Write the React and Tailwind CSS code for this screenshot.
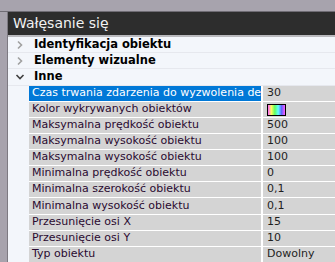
import React from "react";

const props = [
  { label: "Czas trwania zdarzenia do wyzwolenia dewiacji", value: "30", selected: true },
  { label: "Kolor wykrywanych obiektów", color: true },
  { label: "Maksymalna prędkość obiektu", value: "500" },
  { label: "Maksymalna wysokość obiektu", value: "100" },
  { label: "Maksymalna wysokość obiektu", value: "100" },
  { label: "Minimalna prędkość obiektu", value: "0" },
  { label: "Minimalna szerokość obiektu", value: "0,1" },
  { label: "Minimalna wysokość obiektu", value: "0,1", tall: true },
  { label: "Przesunięcie osi X", value: "15" },
  { label: "Przesunięcie osi Y", value: "10" },
  { label: "Typ obiektu", value: "Dowolny" },
];

const Chevron = ({ open }) => (
  <svg width="10" height="10" viewBox="0 0 10 10" className="shrink-0">
    {open ? (
      <path d="M1.5 3 L5 6.5 L8.5 3" fill="none" stroke="#404040" strokeWidth="1.6" />
    ) : (
      <path d="M3 1.5 L6.5 5 L3 8.5" fill="none" stroke="#a0a0a0" strokeWidth="1.6" />
    )}
  </svg>
);

const Group = ({ title, open }) => (
  <div
    className={
      "flex items-center gap-[9px] pl-[7px] border-b border-[#e6e8ee] " +
      (open ? "h-[17px]" : "h-[16px]")
    }
  >
    <Chevron open={open} />
    <span className="font-bold text-[11.5px] text-black">{title}</span>
  </div>
);

export default function App() {
  return (
    <div
      className="w-[335px] h-[262px] bg-[#a7a3ad] flex flex-col overflow-hidden"
      style={{ fontFamily: "'DejaVu Sans', Tahoma, sans-serif" }}
    >
      <div className="h-[12px] shrink-0 border-b border-[#6f6c74]" />
      <div className="flex flex-1 min-h-0">
        <div className="w-[8px] shrink-0 border-r border-[#7d7a82]" />
        <div className="flex-1 flex flex-col bg-[#f3f6fb] min-w-0">
          <div className="h-[25px] shrink-0 bg-[#2d2d2d] border-b-2 border-[#b9b9bd] flex items-center pl-[5px] text-[14px] text-[#f2f2f2]">
            Wałęsanie się
          </div>
          <Group title="Identyfikacja obiektu" />
          <Group title="Elementy wizualne" />
          <Group title="Inne" open />
          <div className="pl-[21px]">
            {props.map((p, i) => (
              <div
                key={i}
                className={
                  "flex border-b border-white text-[11px] " + (p.tall ? "h-[17px]" : "h-[16px]")
                }
              >
                <div
                  className={
                    "w-[234px] shrink-0 pl-[3px] border-r-2 border-white flex items-center overflow-hidden whitespace-nowrap " +
                    (p.selected ? "bg-[#0078d7] text-white" : "bg-[#d4d4d4] text-[#2a0a30]")
                  }
                >
                  {p.label}
                </div>
                <div className="flex-1 bg-[#d4d4d4] pl-[4px] flex items-center text-[#1e1e1e]">
                  {p.color ? (
                    <div
                      className="w-[19px] h-[12px] border border-black"
                      style={{
                        background:
                          "linear-gradient(to right, #ff60ff, #ffff60, #60ff60, #60ffff, #6060ff, #ff60ff)",
                      }}
                    />
                  ) : (
                    p.value
                  )}
                </div>
              </div>
            ))}
          </div>
        </div>
      </div>
    </div>
  );
}
